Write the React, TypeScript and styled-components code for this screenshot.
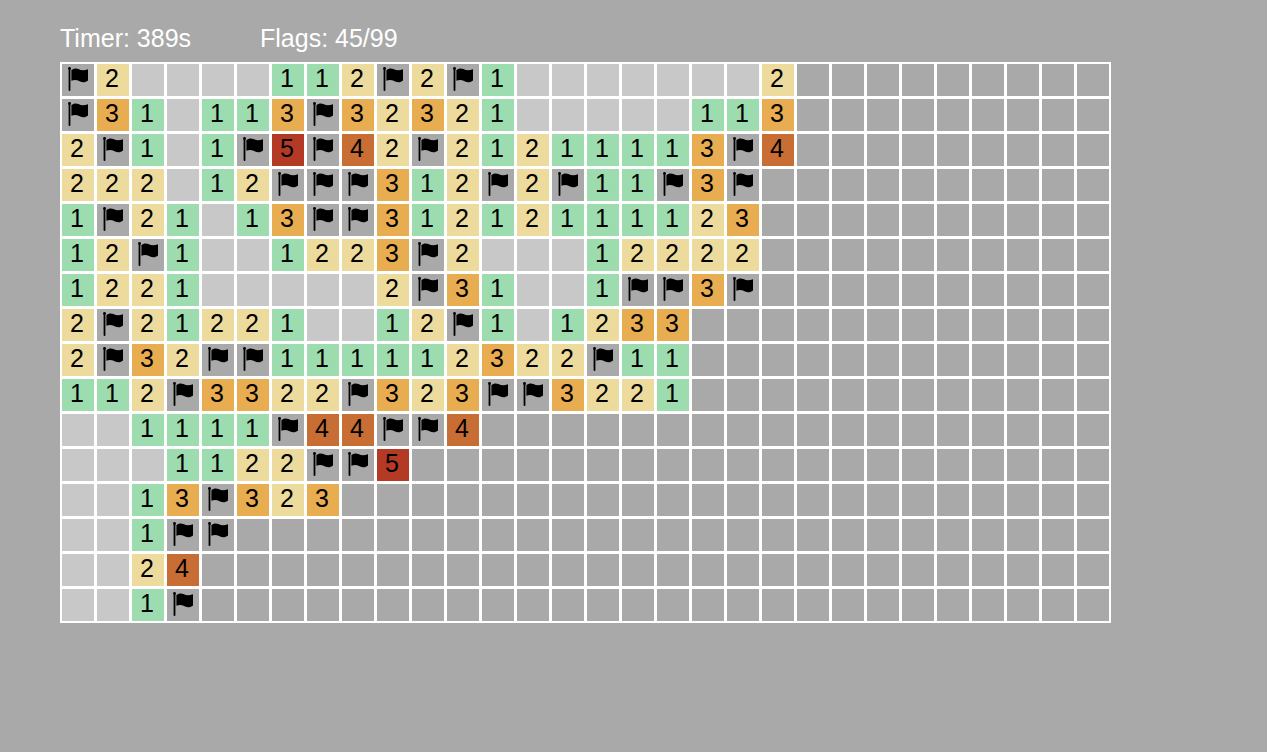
import React from "react";
import styled, { createGlobalStyle } from "styled-components";

const COLUMNS = 30;

// "." opened and empty, "F" flagged, digits are mine counts; the rest of a row is still covered
const BOARD = [
  "F2....112F2F1.......2",
  "F31.113F32321.....113",
  "2F1.1F5F42F21211113F4",
  "222.12FFF312F2F11F3F",
  "1F21.13FF31212111123",
  "12F1..1223F2...12222",
  "1221.....2F31..1FF3F",
  "2F21221..12F1.1233",
  "2F32FF111112322F11",
  "112F3322F323FF3221",
  "..1111F44FF4",
  "...1122FF5",
  "..13F323",
  "..1FF",
  "..24",
  "..1F",
].map((row) => row.padEnd(COLUMNS, "#"));

const CELL_COLORS: Record<string, string> = {
  "#": "#a9a9a9",
  F: "#a9a9a9",
  ".": "#c8c8c8",
  "1": "#9cdcae",
  "2": "#ecdb9c",
  "3": "#e8ad50",
  "4": "#c86e34",
  "5": "#b43a26",
};

const GlobalStyle = createGlobalStyle`
  body {
    margin: 0;
    background: #a9a9a9;
    font-family: "Liberation Sans", Arial, Helvetica, sans-serif;
  }
`;

const Game = styled.main`
  padding: 24px 60px;
`;

const StatusBar = styled.header`
  display: flex;
  height: 38px;
  color: #fff;
  font-size: 25px;
  line-height: 28px;
`;

const Status = styled.div`
  width: 200px;
  white-space: nowrap;
`;

const Board = styled.div`
  display: grid;
  grid-template-columns: repeat(${COLUMNS}, 32px);
  grid-auto-rows: 32px;
  gap: 3px;
  width: max-content;
  padding: 2px;
  background: #fff;
`;

const Cell = styled.button<{ $kind: string }>`
  display: flex;
  align-items: flex-start;
  justify-content: center;
  margin: 0;
  padding: 0 2px 0 0;
  border: 0;
  background: ${({ $kind }) => CELL_COLORS[$kind]};
  color: #000;
  font: inherit;
  font-size: 25px;
  line-height: 28px;
`;

const FlagIcon = styled.svg`
  flex: none;
  width: 30px;
  height: 32px;
`;

function Flag() {
  return (
    <FlagIcon viewBox="0 0 30 32" aria-hidden="true">
      <rect x="6.6" y="4" width="1.8" height="23" rx="0.8" />
      <circle cx="7.5" cy="4.4" r="1.4" />
      <path d="M9.4 6C11.4 4.4 14 4 16.4 5C19.4 6.5 22 6.7 26 5.2V16.6C23.4 18.8 20.4 18.8 17.6 17.2C14.8 15.7 12.2 15.4 9.4 16.7Z" />
    </FlagIcon>
  );
}

function cellLabel(kind: string) {
  if (kind === "#") return "Covered";
  if (kind === "F") return "Flag";
  if (kind === ".") return "Empty";
  return kind;
}

export default function App() {
  return (
    <>
      <GlobalStyle />
      <Game>
        <StatusBar>
          <Status>Timer: 389s</Status>
          <Status>Flags: 45/99</Status>
        </StatusBar>
        <Board>
          {BOARD.map((row, y) =>
            [...row].map((kind, x) => (
              <Cell key={`${y}-${x}`} type="button" $kind={kind} aria-label={cellLabel(kind)}>
                {kind === "F" ? <Flag /> : /\d/.test(kind) ? kind : null}
              </Cell>
            ))
          )}
        </Board>
      </Game>
    </>
  );
}
